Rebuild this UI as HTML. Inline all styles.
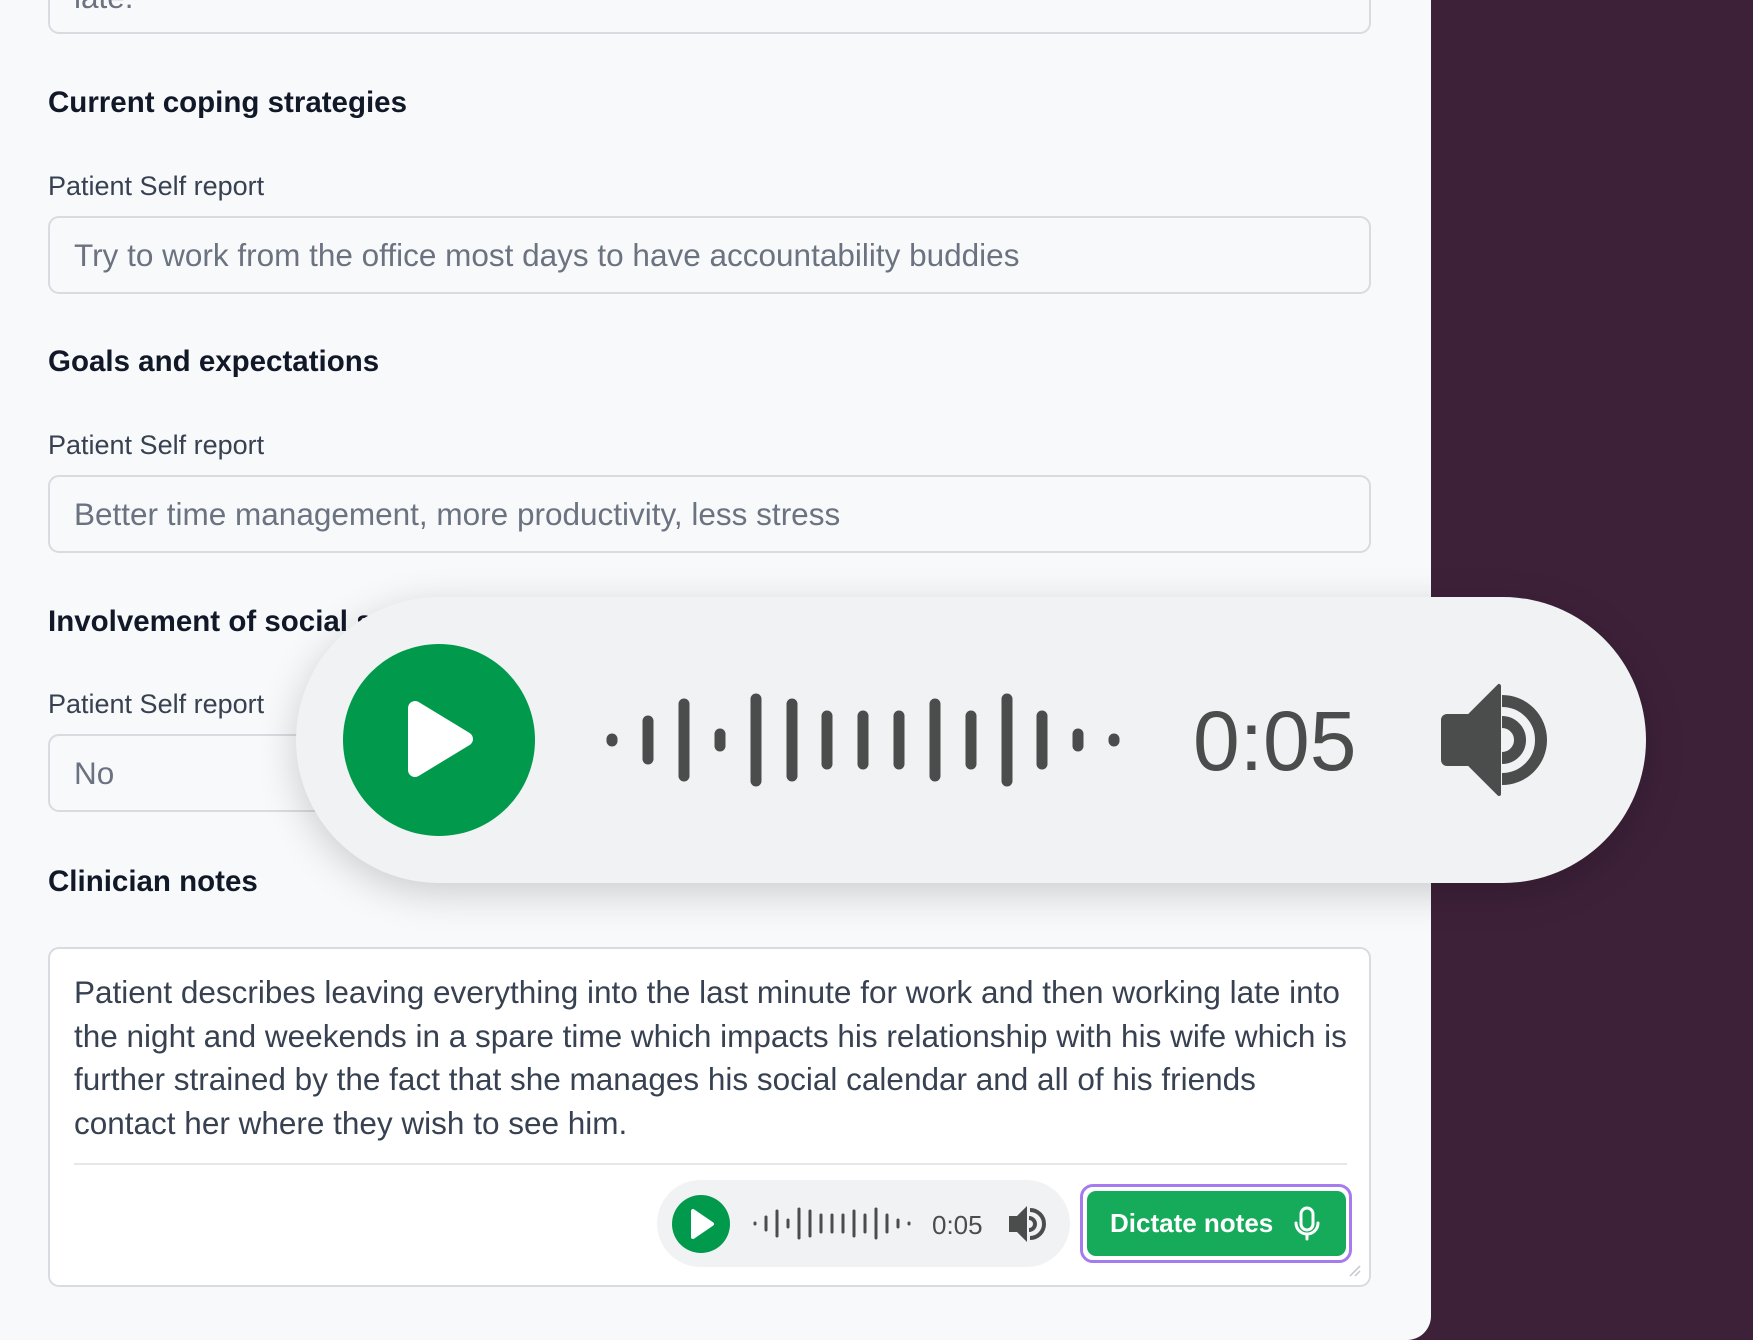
<!DOCTYPE html>
<html><head><meta charset="utf-8"><style>
*{margin:0;padding:0;box-sizing:border-box}
body{width:1753px;height:1340px;background:#3d2139;position:relative;overflow:hidden;font-family:"Liberation Sans",Arial,sans-serif}
.panel{position:absolute;left:0;top:-40px;width:1431px;height:1380px;background:#f8f9fb;border-radius:0 0 24px 0}
.h{position:absolute;left:48px;font-size:29.5px;font-weight:bold;color:#111827;line-height:1}
.l{position:absolute;left:48px;font-size:27px;color:#374151;line-height:1}
.in{position:absolute;left:48px;width:1323px;border:2px solid #d8dbe0;border-radius:11px;background:#f8f9fb;font-size:31.5px;color:#6b7280;padding-left:24px;display:flex;align-items:center;white-space:nowrap}
.ta{position:absolute;left:48px;top:947px;width:1323px;height:340px;border:2px solid #d8dbe0;border-radius:11px;background:#fff}
.txt{position:absolute;left:24px;top:22px;font-size:31.5px;line-height:43.6px;color:#374151;white-space:nowrap}
</style></head><body>
<div class="panel"></div>
<div class="in" style="top:-40px;height:74px;">late.</div>
<div class="h" style="top:88px">Current coping strategies</div>
<div class="l" style="top:173px">Patient Self report</div>
<div class="in" style="top:216px;height:78px">Try to work from the office most days to have accountability buddies</div>
<div class="h" style="top:347px">Goals and expectations</div>
<div class="l" style="top:432px">Patient Self report</div>
<div class="in" style="top:475px;height:78px">Better time management, more productivity, less stress</div>
<div class="h" style="top:607px">Involvement of social support</div>
<div class="l" style="top:691px">Patient Self report</div>
<div class="in" style="top:734px;height:78px">No</div>
<div class="h" style="top:867px">Clinician notes</div>
<div class="ta">
<div class="txt">Patient describes leaving everything into the last minute for work and then working late into<br>the night and weekends in a spare time which impacts his relationship with his wife which is<br>further strained by the fact that she manages his social calendar and all of his friends<br>contact her where they wish to see him.</div>
<div style="position:absolute;left:24px;top:214px;width:1273px;height:2px;background:#e5e7eb"></div>
<svg style="position:absolute;right:8px;bottom:8px" width="14" height="14"><path d="M13 3L3 13M13 8L8 13" stroke="#c4c7cc" stroke-width="1.5"/></svg>
</div>
<div style="position:absolute;left:657px;top:1180px;width:413px;height:87px;border-radius:44px;background:#f1f2f4"></div>
<svg style="position:absolute;left:0;top:0" width="1753" height="1340">
<circle cx="701" cy="1224" r="29" fill="#019a4d"/>
<path d="M693 1211 L693 1237 L712 1224 Z" fill="#fff" stroke="#fff" stroke-width="4" stroke-linejoin="round"/>
<g stroke="#4b4d4c" stroke-width="3" stroke-linecap="round">
<line x1="755" y1="1223" x2="755" y2="1224"/><line x1="766" y1="1217" x2="766" y2="1230"/><line x1="777" y1="1211" x2="777" y2="1236"/><line x1="788" y1="1220" x2="788" y2="1227"/><line x1="799" y1="1209" x2="799" y2="1238"/><line x1="810" y1="1211" x2="810" y2="1236"/><line x1="821" y1="1215" x2="821" y2="1232"/><line x1="832" y1="1215" x2="832" y2="1232"/><line x1="843" y1="1215" x2="843" y2="1232"/><line x1="854" y1="1211" x2="854" y2="1236"/><line x1="865" y1="1215" x2="865" y2="1232"/><line x1="876" y1="1209" x2="876" y2="1238"/><line x1="887" y1="1215" x2="887" y2="1232"/><line x1="898" y1="1220" x2="898" y2="1227"/><line x1="909" y1="1223" x2="909" y2="1224"/>
</g>
<text x="932" y="1234" font-family="Liberation Sans" font-size="26" fill="#4b4d4c">0:05</text>
<path d="M1009 1216h8l10-10v36l-10-10h-8z" fill="#4b4d4c"/>
<path d="M1029 1218a6 6 0 0 1 0 12M1030 1210a14 14 0 0 1 0 28" stroke="#4b4d4c" stroke-width="4" fill="none"/>
</svg>
<div style="position:absolute;left:1080px;top:1184px;width:272px;height:79px;border:3px solid #a47cf0;border-radius:13px;background:#fff"></div>
<div style="position:absolute;left:1087px;top:1191px;width:259px;height:65px;border-radius:9px;background:#16ab5a;color:#fff;font-size:26px;font-weight:bold;display:flex;align-items:center;padding-left:23px">Dictate notes</div>
<svg style="position:absolute;left:1292px;top:1206px" width="30" height="36"><rect x="9" y="2" width="12" height="22" rx="6" stroke="#fff" stroke-width="3" fill="none"/><path d="M4 17a11 11 0 0 0 22 0M15 28v5" stroke="#fff" stroke-width="3" fill="none" stroke-linecap="round"/></svg>
<div style="position:absolute;left:296px;top:597px;width:1350px;height:286px;border-radius:143px;background:#f1f2f4;box-shadow:0 10px 40px rgba(0,0,0,0.18)"></div>
<svg style="position:absolute;left:0;top:0" width="1753" height="1340">
<circle cx="439" cy="740" r="96" fill="#019a4d"/>
<path d="M415 708 L415 770 L466 739 Z" fill="#fff" stroke="#fff" stroke-width="14" stroke-linejoin="round"/>
<g stroke="#4b4d4c" stroke-width="11" stroke-linecap="round">
<line x1="612" y1="739" x2="612" y2="741"/><line x1="648" y1="721" x2="648" y2="759"/><line x1="684" y1="704" x2="684" y2="776"/><line x1="720" y1="734" x2="720" y2="746"/><line x1="756" y1="699" x2="756" y2="781"/><line x1="792" y1="704" x2="792" y2="776"/><line x1="827" y1="716" x2="827" y2="764"/><line x1="863" y1="716" x2="863" y2="764"/><line x1="899" y1="716" x2="899" y2="764"/><line x1="935" y1="704" x2="935" y2="776"/><line x1="971" y1="716" x2="971" y2="764"/><line x1="1007" y1="699" x2="1007" y2="781"/><line x1="1042" y1="716" x2="1042" y2="764"/><line x1="1078" y1="734" x2="1078" y2="746"/><line x1="1114" y1="739" x2="1114" y2="741"/>
</g>
<text x="1193" y="770" font-family="Liberation Sans" font-size="84" fill="#4b4d4c">0:05</text>
<path d="M1447 716h22l30-30v108l-30-30h-22a4 4 0 0 1-4-4v-40a4 4 0 0 1 4-4z" fill="#4b4d4c" stroke="#4b4d4c" stroke-width="4" stroke-linejoin="round"/>
<path d="M1502 722a18 18 0 0 1 0 36M1502 701a39 39 0 0 1 0 78" stroke="#4b4d4c" stroke-width="12" fill="none"/>
</svg>
</body></html>
